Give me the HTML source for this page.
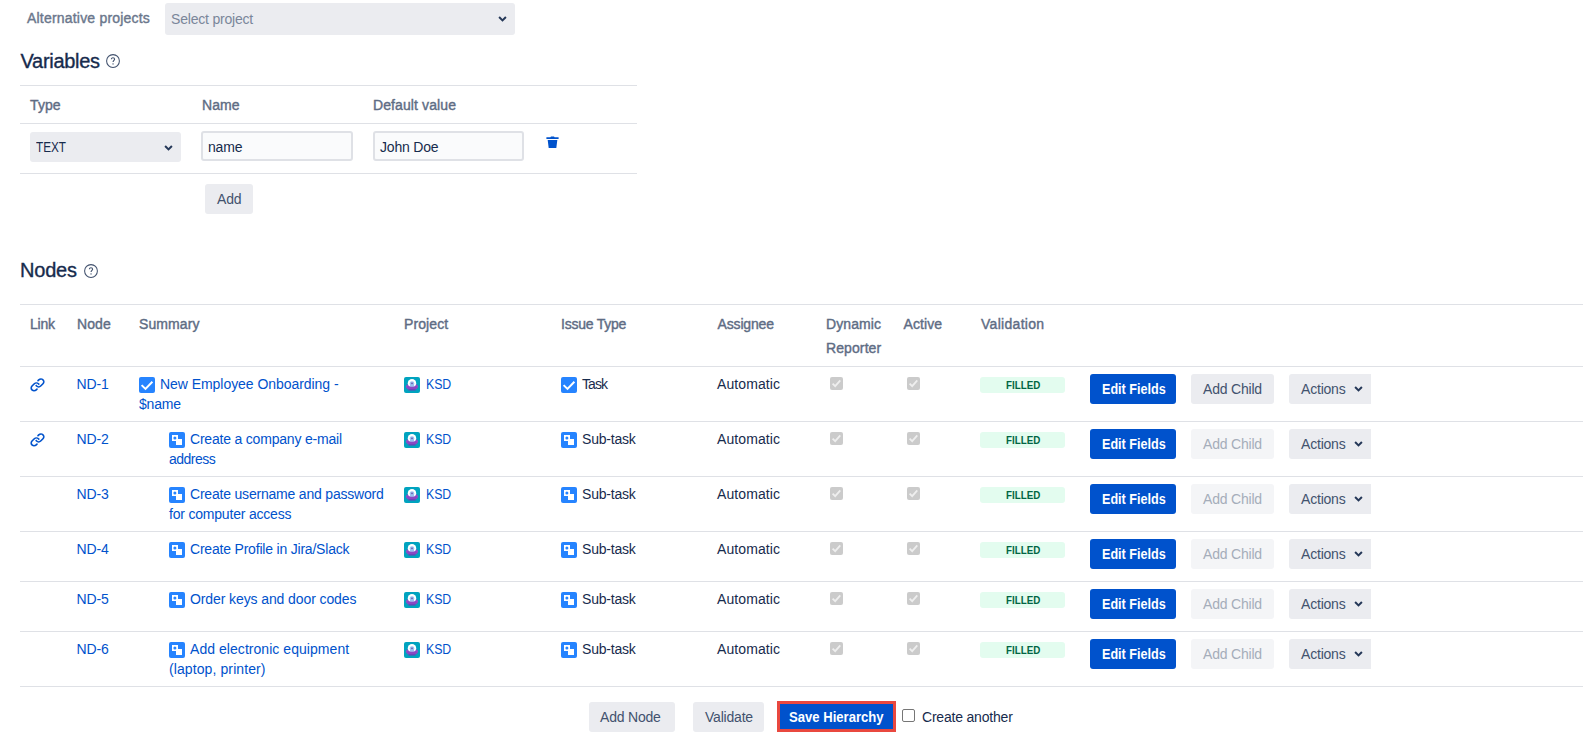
<!DOCTYPE html>
<html><head><meta charset="utf-8"><title>Nodes</title>
<style>
html,body{margin:0;padding:0;background:#fff;}
body{width:1583px;height:751px;position:relative;overflow:hidden;font-family:"Liberation Sans", sans-serif;-webkit-font-smoothing:antialiased;}
.t{position:absolute;white-space:nowrap;}
.b{position:absolute;display:block;}
</style></head><body>
<div class="t" style="left:27px;top:8.15px;font-size:14px;line-height:20px;font-weight:400;color:#6b778c;letter-spacing:0.2px;-webkit-text-stroke:0.4px #6b778c;">Alternative projects</div>
<div class="b" style="left:165px;top:3px;width:350px;height:32px;background:#ebecf0;border-radius:3px"></div>
<div class="t" style="left:171px;top:9.15px;font-size:14px;line-height:20px;font-weight:400;color:#7a869a;letter-spacing:-0.2px;">Select project</div>
<svg class="b" style="left:497px;top:14px" width="11" height="9" viewBox="0 0 11 9"><path d="M2.1 3 L5.5 6.4 L8.9 3" fill="none" stroke="#253858" stroke-width="2" stroke-linecap="butt"/></svg>
<div class="t" style="left:20.5px;top:46.57px;font-size:20px;line-height:29px;font-weight:400;color:#172b4d;letter-spacing:-0.3px;-webkit-text-stroke:0.35px #172b4d;">Variables</div>
<svg class="b" style="left:106px;top:54px" width="14" height="14" viewBox="0 0 14 14"><circle cx="7" cy="7" r="6.4" fill="none" stroke="#42526e" stroke-width="1.05"/><path d="M5.4 5.3 C5.4 4.3 6.1 3.8 7 3.8 C7.9 3.8 8.6 4.4 8.6 5.2 C8.6 6.4 7.05 6.5 7.05 8.1" fill="none" stroke="#42526e" stroke-width="1.1"/><circle cx="7.05" cy="9.9" r="0.7" fill="#42526e"/></svg>
<div class="b" style="left:20px;top:85px;width:617px;height:1px;background:#dfe1e6"></div>
<div class="t" style="left:30px;top:95.15px;font-size:14px;line-height:20px;font-weight:400;color:#5e6c84;letter-spacing:0.1px;-webkit-text-stroke:0.4px #5e6c84;">Type</div>
<div class="t" style="left:202px;top:95.15px;font-size:14px;line-height:20px;font-weight:400;color:#5e6c84;letter-spacing:0.1px;-webkit-text-stroke:0.4px #5e6c84;">Name</div>
<div class="t" style="left:373px;top:95.15px;font-size:14px;line-height:20px;font-weight:400;color:#5e6c84;letter-spacing:0.1px;-webkit-text-stroke:0.4px #5e6c84;">Default value</div>
<div class="b" style="left:20px;top:123px;width:617px;height:1px;background:#dfe1e6"></div>
<div class="b" style="left:30px;top:132px;width:151px;height:30px;background:#ebecf0;border-radius:3px"></div>
<div class="t" style="left:36px;top:137.15px;font-size:14px;line-height:20px;font-weight:400;color:#172b4d;letter-spacing:0px;transform:scaleX(0.84);transform-origin:0 0;">TEXT</div>
<svg class="b" style="left:163px;top:143px" width="11" height="9" viewBox="0 0 11 9"><path d="M2.1 3 L5.5 6.4 L8.9 3" fill="none" stroke="#253858" stroke-width="2" stroke-linecap="butt"/></svg>
<div class="b" style="left:201px;top:131px;width:152px;height:30px;background:#fafbfc;border:2px solid #dfe1e6;border-radius:3px;box-sizing:border-box"></div>
<div class="t" style="left:208px;top:137.15px;font-size:14px;line-height:20px;font-weight:400;color:#172b4d;letter-spacing:-0.2px;">name</div>
<div class="b" style="left:373px;top:131px;width:151px;height:30px;background:#fafbfc;border:2px solid #dfe1e6;border-radius:3px;box-sizing:border-box"></div>
<div class="t" style="left:380px;top:137.15px;font-size:14px;line-height:20px;font-weight:400;color:#172b4d;letter-spacing:-0.2px;">John Doe</div>
<svg class="b" style="left:546px;top:136px" width="13" height="12" viewBox="0 0 13 12"><path d="M5 0.5 H8 L8.6 1.2 H12.6 V2.9 H0.4 V1.2 H4.4 Z" fill="#0052cc"/><path d="M1.7 3.9 H11.3 L10.3 12 H2.7 Z" fill="#0052cc"/></svg>
<div class="b" style="left:20px;top:173px;width:617px;height:1px;background:#dfe1e6"></div>
<div class="b" style="left:205px;top:184px;width:48px;height:30px;background:#ebecf0;border-radius:3px"></div>
<div class="t" style="left:217px;top:189.15px;font-size:14px;line-height:20px;font-weight:400;color:#42526e;letter-spacing:-0.2px;">Add</div>
<div class="t" style="left:20px;top:255.57px;font-size:20px;line-height:29px;font-weight:400;color:#172b4d;letter-spacing:-0.2px;-webkit-text-stroke:0.35px #172b4d;">Nodes</div>
<svg class="b" style="left:84px;top:264px" width="14" height="14" viewBox="0 0 14 14"><circle cx="7" cy="7" r="6.4" fill="none" stroke="#42526e" stroke-width="1.05"/><path d="M5.4 5.3 C5.4 4.3 6.1 3.8 7 3.8 C7.9 3.8 8.6 4.4 8.6 5.2 C8.6 6.4 7.05 6.5 7.05 8.1" fill="none" stroke="#42526e" stroke-width="1.1"/><circle cx="7.05" cy="9.9" r="0.7" fill="#42526e"/></svg>
<div class="b" style="left:20px;top:304px;width:1563px;height:1px;background:#dfe1e6"></div>
<div class="b" style="left:20px;top:366px;width:1563px;height:1px;background:#dfe1e6"></div>
<div class="b" style="left:20px;top:421px;width:1563px;height:1px;background:#dfe1e6"></div>
<div class="b" style="left:20px;top:476px;width:1563px;height:1px;background:#dfe1e6"></div>
<div class="b" style="left:20px;top:531px;width:1563px;height:1px;background:#dfe1e6"></div>
<div class="b" style="left:20px;top:581px;width:1563px;height:1px;background:#dfe1e6"></div>
<div class="b" style="left:20px;top:631px;width:1563px;height:1px;background:#dfe1e6"></div>
<div class="b" style="left:20px;top:686px;width:1563px;height:1px;background:#dfe1e6"></div>
<div class="t" style="left:30px;top:314.15px;font-size:14px;line-height:20px;font-weight:400;color:#5e6c84;letter-spacing:-0.2px;-webkit-text-stroke:0.4px #5e6c84;">Link</div>
<div class="t" style="left:77px;top:314.15px;font-size:14px;line-height:20px;font-weight:400;color:#5e6c84;letter-spacing:0.1px;-webkit-text-stroke:0.4px #5e6c84;">Node</div>
<div class="t" style="left:139px;top:314.15px;font-size:14px;line-height:20px;font-weight:400;color:#5e6c84;letter-spacing:0.1px;-webkit-text-stroke:0.4px #5e6c84;">Summary</div>
<div class="t" style="left:404px;top:314.15px;font-size:14px;line-height:20px;font-weight:400;color:#5e6c84;letter-spacing:0.1px;-webkit-text-stroke:0.4px #5e6c84;">Project</div>
<div class="t" style="left:561px;top:314.15px;font-size:14px;line-height:20px;font-weight:400;color:#5e6c84;letter-spacing:-0.23px;-webkit-text-stroke:0.4px #5e6c84;">Issue Type</div>
<div class="t" style="left:717.5px;top:314.15px;font-size:14px;line-height:20px;font-weight:400;color:#5e6c84;letter-spacing:-0.15px;-webkit-text-stroke:0.4px #5e6c84;">Assignee</div>
<div class="t" style="left:826px;top:314.15px;font-size:14px;line-height:20px;font-weight:400;color:#5e6c84;letter-spacing:0.1px;-webkit-text-stroke:0.4px #5e6c84;">Dynamic</div>
<div class="t" style="left:903.5px;top:314.15px;font-size:14px;line-height:20px;font-weight:400;color:#5e6c84;letter-spacing:0.1px;-webkit-text-stroke:0.4px #5e6c84;">Active</div>
<div class="t" style="left:981px;top:314.15px;font-size:14px;line-height:20px;font-weight:400;color:#5e6c84;letter-spacing:0.3px;-webkit-text-stroke:0.4px #5e6c84;">Validation</div>
<div class="t" style="left:826px;top:338.15px;font-size:14px;line-height:20px;font-weight:400;color:#5e6c84;letter-spacing:0.1px;-webkit-text-stroke:0.4px #5e6c84;">Reporter</div>
<svg class="b" style="left:28.30px;top:374.60px" width="19" height="19" viewBox="0 0 24 24"><g fill="#0052cc"><path d="M12.856 5.457l-.937.92a1.002 1.002 0 000 1.437 1.047 1.047 0 001.463 0l.984-.966c.967-.95 2.542-1.135 3.602-.288a2.54 2.54 0 01.203 3.81l-2.903 2.852a2.646 2.646 0 01-3.696 0l-1.11-1.09L9 13.57l1.108 1.089c1.822 1.788 4.802 1.788 6.622 0l2.905-2.852a4.558 4.558 0 00-.357-6.82c-1.893-1.517-4.695-1.226-6.422.47"/><path d="M11.144 19.543l.937-.92a1.002 1.002 0 000-1.437 1.047 1.047 0 00-1.462 0l-.985.966c-.967.95-2.542 1.135-3.602.288a2.54 2.54 0 01-.203-3.81l2.903-2.852a2.646 2.646 0 013.696 0l1.11 1.09L15 11.43l-1.108-1.089c-1.822-1.788-4.802-1.788-6.622 0l-2.905 2.852a4.558 4.558 0 00.357 6.82c1.893 1.517 4.695 1.226 6.422-.47"/></g></svg>
<div class="t" style="left:76.5px;top:374.15px;font-size:14px;line-height:20px;font-weight:400;color:#0052cc;letter-spacing:-0.1px;">ND-1</div>
<svg class="b" style="left:139px;top:377px" width="16" height="16" viewBox="0 0 16 16"><rect x="0" y="0" width="16" height="16" rx="2" fill="#2684ff"/><path d="M2.6 8.1 L6.5 11.9 L13.4 4.8" fill="none" stroke="#fff" stroke-width="2"/></svg>
<div class="t" style="left:160px;top:374.15px;font-size:14px;line-height:20px;font-weight:400;color:#0052cc;letter-spacing:-0.05px;">New Employee Onboarding -</div>
<div class="t" style="left:139px;top:394.15px;font-size:14px;line-height:20px;font-weight:400;color:#0052cc;letter-spacing:-0.2px;">$name</div>
<svg class="b" style="left:404px;top:377px" width="16" height="16" viewBox="0 0 16 16"><rect x="0" y="0" width="16" height="16" rx="2" fill="#00a3bf"/><ellipse cx="8" cy="9.5" rx="6.1" ry="3.1" fill="#8e4fc9"/><circle cx="8" cy="6.3" r="4.2" fill="#fff"/><ellipse cx="8" cy="10.8" rx="5.4" ry="1.9" fill="#8a48c4"/><rect x="4.4" y="12.2" width="7.2" height="1.3" rx="0.6" fill="#6a3fb5"/><circle cx="8" cy="6.6" r="2.3" fill="#9cc1f2"/><rect x="5.9" y="7" width="4.2" height="2.8" rx="1" fill="#9cc1f2"/><circle cx="8" cy="6.3" r="0.9" fill="#6b5aa8"/></svg>
<div class="t" style="left:425.5px;top:374.15px;font-size:14px;line-height:20px;font-weight:400;color:#0052cc;letter-spacing:-0.1px;transform:scaleX(0.88);transform-origin:0 0;">KSD</div>
<svg class="b" style="left:561px;top:377px" width="16" height="16" viewBox="0 0 16 16"><rect x="0" y="0" width="16" height="16" rx="2" fill="#2684ff"/><path d="M2.6 8.1 L6.5 11.9 L13.4 4.8" fill="none" stroke="#fff" stroke-width="2"/></svg>
<div class="t" style="left:582px;top:374.15px;font-size:14px;line-height:20px;font-weight:400;color:#172b4d;letter-spacing:-0.9px;">Task</div>
<div class="t" style="left:717px;top:374.15px;font-size:14px;line-height:20px;font-weight:400;color:#172b4d;letter-spacing:0.1px;">Automatic</div>
<svg class="b" style="left:830px;top:377px" width="13" height="13" viewBox="0 0 13 13"><rect x="0" y="0" width="13" height="13" rx="2" fill="#cbcbcb"/><path d="M2.6 6.6 L5.2 9.1 L10.3 3.4" fill="none" stroke="#efefef" stroke-width="1.8"/></svg>
<svg class="b" style="left:907px;top:377px" width="13" height="13" viewBox="0 0 13 13"><rect x="0" y="0" width="13" height="13" rx="2" fill="#cbcbcb"/><path d="M2.6 6.6 L5.2 9.1 L10.3 3.4" fill="none" stroke="#efefef" stroke-width="1.8"/></svg>
<div class="b" style="left:980px;top:377px;width:85px;height:16px;background:#e3fcef;border-radius:3px"></div>
<div class="t" style="left:1005.5px;top:377.19px;font-size:11px;line-height:16px;font-weight:700;color:#006644;letter-spacing:0px;transform:scaleX(0.89);transform-origin:0 0;">FILLED</div>
<div class="b" style="left:1090px;top:374px;width:86px;height:30px;background:#0052cc;border-radius:3px"></div>
<div class="t" style="left:1102px;top:379.15px;font-size:14px;line-height:20px;font-weight:700;color:#fff;letter-spacing:0px;transform:scaleX(0.9);transform-origin:0 0;">Edit Fields</div>
<div class="b" style="left:1191px;top:374px;width:83px;height:30px;background:#ebecf0;border-radius:3px"></div>
<div class="t" style="left:1203px;top:379.15px;font-size:14px;line-height:20px;font-weight:400;color:#42526e;letter-spacing:-0.2px;">Add Child</div>
<div class="b" style="left:1289px;top:374px;width:82px;height:30px;background:#ebecf0;border-radius:3px 0 0 3px"></div>
<div class="t" style="left:1301px;top:379.15px;font-size:14px;line-height:20px;font-weight:400;color:#42526e;letter-spacing:-0.2px;">Actions</div>
<svg class="b" style="left:1353px;top:384px" width="11" height="9" viewBox="0 0 11 9"><path d="M2.1 3 L5.5 6.4 L8.9 3" fill="none" stroke="#253858" stroke-width="2" stroke-linecap="butt"/></svg>
<svg class="b" style="left:28.30px;top:429.60px" width="19" height="19" viewBox="0 0 24 24"><g fill="#0052cc"><path d="M12.856 5.457l-.937.92a1.002 1.002 0 000 1.437 1.047 1.047 0 001.463 0l.984-.966c.967-.95 2.542-1.135 3.602-.288a2.54 2.54 0 01.203 3.81l-2.903 2.852a2.646 2.646 0 01-3.696 0l-1.11-1.09L9 13.57l1.108 1.089c1.822 1.788 4.802 1.788 6.622 0l2.905-2.852a4.558 4.558 0 00-.357-6.82c-1.893-1.517-4.695-1.226-6.422.47"/><path d="M11.144 19.543l.937-.92a1.002 1.002 0 000-1.437 1.047 1.047 0 00-1.462 0l-.985.966c-.967.95-2.542 1.135-3.602.288a2.54 2.54 0 01-.203-3.81l2.903-2.852a2.646 2.646 0 013.696 0l1.11 1.09L15 11.43l-1.108-1.089c-1.822-1.788-4.802-1.788-6.622 0l-2.905 2.852a4.558 4.558 0 00.357 6.82c1.893 1.517 4.695 1.226 6.422-.47"/></g></svg>
<div class="t" style="left:76.5px;top:429.15px;font-size:14px;line-height:20px;font-weight:400;color:#0052cc;letter-spacing:-0.1px;">ND-2</div>
<svg class="b" style="left:169px;top:432px" width="16" height="16" viewBox="0 0 16 16"><rect x="0" y="0" width="16" height="16" rx="2" fill="#2684ff"/><rect x="3" y="3" width="6" height="6" fill="#fff"/><circle cx="5.9" cy="5.9" r="1.5" fill="#2684ff"/><rect x="7" y="7" width="6" height="6" fill="#fff"/></svg>
<div class="t" style="left:190px;top:429.15px;font-size:14px;line-height:20px;font-weight:400;color:#0052cc;letter-spacing:-0.2px;">Create a company e-mail</div>
<div class="t" style="left:169px;top:449.15px;font-size:14px;line-height:20px;font-weight:400;color:#0052cc;letter-spacing:-0.5px;">address</div>
<svg class="b" style="left:404px;top:432px" width="16" height="16" viewBox="0 0 16 16"><rect x="0" y="0" width="16" height="16" rx="2" fill="#00a3bf"/><ellipse cx="8" cy="9.5" rx="6.1" ry="3.1" fill="#8e4fc9"/><circle cx="8" cy="6.3" r="4.2" fill="#fff"/><ellipse cx="8" cy="10.8" rx="5.4" ry="1.9" fill="#8a48c4"/><rect x="4.4" y="12.2" width="7.2" height="1.3" rx="0.6" fill="#6a3fb5"/><circle cx="8" cy="6.6" r="2.3" fill="#9cc1f2"/><rect x="5.9" y="7" width="4.2" height="2.8" rx="1" fill="#9cc1f2"/><circle cx="8" cy="6.3" r="0.9" fill="#6b5aa8"/></svg>
<div class="t" style="left:425.5px;top:429.15px;font-size:14px;line-height:20px;font-weight:400;color:#0052cc;letter-spacing:-0.1px;transform:scaleX(0.88);transform-origin:0 0;">KSD</div>
<svg class="b" style="left:561px;top:432px" width="16" height="16" viewBox="0 0 16 16"><rect x="0" y="0" width="16" height="16" rx="2" fill="#2684ff"/><rect x="3" y="3" width="6" height="6" fill="#fff"/><circle cx="5.9" cy="5.9" r="1.5" fill="#2684ff"/><rect x="7" y="7" width="6" height="6" fill="#fff"/></svg>
<div class="t" style="left:582px;top:429.15px;font-size:14px;line-height:20px;font-weight:400;color:#172b4d;letter-spacing:-0.2px;">Sub-task</div>
<div class="t" style="left:717px;top:429.15px;font-size:14px;line-height:20px;font-weight:400;color:#172b4d;letter-spacing:0.1px;">Automatic</div>
<svg class="b" style="left:830px;top:432px" width="13" height="13" viewBox="0 0 13 13"><rect x="0" y="0" width="13" height="13" rx="2" fill="#cbcbcb"/><path d="M2.6 6.6 L5.2 9.1 L10.3 3.4" fill="none" stroke="#efefef" stroke-width="1.8"/></svg>
<svg class="b" style="left:907px;top:432px" width="13" height="13" viewBox="0 0 13 13"><rect x="0" y="0" width="13" height="13" rx="2" fill="#cbcbcb"/><path d="M2.6 6.6 L5.2 9.1 L10.3 3.4" fill="none" stroke="#efefef" stroke-width="1.8"/></svg>
<div class="b" style="left:980px;top:432px;width:85px;height:16px;background:#e3fcef;border-radius:3px"></div>
<div class="t" style="left:1005.5px;top:432.19px;font-size:11px;line-height:16px;font-weight:700;color:#006644;letter-spacing:0px;transform:scaleX(0.89);transform-origin:0 0;">FILLED</div>
<div class="b" style="left:1090px;top:429px;width:86px;height:30px;background:#0052cc;border-radius:3px"></div>
<div class="t" style="left:1102px;top:434.15px;font-size:14px;line-height:20px;font-weight:700;color:#fff;letter-spacing:0px;transform:scaleX(0.9);transform-origin:0 0;">Edit Fields</div>
<div class="b" style="left:1191px;top:429px;width:83px;height:30px;background:#f4f5f7;border-radius:3px"></div>
<div class="t" style="left:1203px;top:434.15px;font-size:14px;line-height:20px;font-weight:400;color:#a5adba;letter-spacing:-0.2px;">Add Child</div>
<div class="b" style="left:1289px;top:429px;width:82px;height:30px;background:#ebecf0;border-radius:3px 0 0 3px"></div>
<div class="t" style="left:1301px;top:434.15px;font-size:14px;line-height:20px;font-weight:400;color:#42526e;letter-spacing:-0.2px;">Actions</div>
<svg class="b" style="left:1353px;top:439px" width="11" height="9" viewBox="0 0 11 9"><path d="M2.1 3 L5.5 6.4 L8.9 3" fill="none" stroke="#253858" stroke-width="2" stroke-linecap="butt"/></svg>
<div class="t" style="left:76.5px;top:484.15px;font-size:14px;line-height:20px;font-weight:400;color:#0052cc;letter-spacing:-0.1px;">ND-3</div>
<svg class="b" style="left:169px;top:487px" width="16" height="16" viewBox="0 0 16 16"><rect x="0" y="0" width="16" height="16" rx="2" fill="#2684ff"/><rect x="3" y="3" width="6" height="6" fill="#fff"/><circle cx="5.9" cy="5.9" r="1.5" fill="#2684ff"/><rect x="7" y="7" width="6" height="6" fill="#fff"/></svg>
<div class="t" style="left:190px;top:484.15px;font-size:14px;line-height:20px;font-weight:400;color:#0052cc;letter-spacing:-0.2px;">Create username and password</div>
<div class="t" style="left:169px;top:504.15px;font-size:14px;line-height:20px;font-weight:400;color:#0052cc;letter-spacing:-0.2px;">for computer access</div>
<svg class="b" style="left:404px;top:487px" width="16" height="16" viewBox="0 0 16 16"><rect x="0" y="0" width="16" height="16" rx="2" fill="#00a3bf"/><ellipse cx="8" cy="9.5" rx="6.1" ry="3.1" fill="#8e4fc9"/><circle cx="8" cy="6.3" r="4.2" fill="#fff"/><ellipse cx="8" cy="10.8" rx="5.4" ry="1.9" fill="#8a48c4"/><rect x="4.4" y="12.2" width="7.2" height="1.3" rx="0.6" fill="#6a3fb5"/><circle cx="8" cy="6.6" r="2.3" fill="#9cc1f2"/><rect x="5.9" y="7" width="4.2" height="2.8" rx="1" fill="#9cc1f2"/><circle cx="8" cy="6.3" r="0.9" fill="#6b5aa8"/></svg>
<div class="t" style="left:425.5px;top:484.15px;font-size:14px;line-height:20px;font-weight:400;color:#0052cc;letter-spacing:-0.1px;transform:scaleX(0.88);transform-origin:0 0;">KSD</div>
<svg class="b" style="left:561px;top:487px" width="16" height="16" viewBox="0 0 16 16"><rect x="0" y="0" width="16" height="16" rx="2" fill="#2684ff"/><rect x="3" y="3" width="6" height="6" fill="#fff"/><circle cx="5.9" cy="5.9" r="1.5" fill="#2684ff"/><rect x="7" y="7" width="6" height="6" fill="#fff"/></svg>
<div class="t" style="left:582px;top:484.15px;font-size:14px;line-height:20px;font-weight:400;color:#172b4d;letter-spacing:-0.2px;">Sub-task</div>
<div class="t" style="left:717px;top:484.15px;font-size:14px;line-height:20px;font-weight:400;color:#172b4d;letter-spacing:0.1px;">Automatic</div>
<svg class="b" style="left:830px;top:487px" width="13" height="13" viewBox="0 0 13 13"><rect x="0" y="0" width="13" height="13" rx="2" fill="#cbcbcb"/><path d="M2.6 6.6 L5.2 9.1 L10.3 3.4" fill="none" stroke="#efefef" stroke-width="1.8"/></svg>
<svg class="b" style="left:907px;top:487px" width="13" height="13" viewBox="0 0 13 13"><rect x="0" y="0" width="13" height="13" rx="2" fill="#cbcbcb"/><path d="M2.6 6.6 L5.2 9.1 L10.3 3.4" fill="none" stroke="#efefef" stroke-width="1.8"/></svg>
<div class="b" style="left:980px;top:487px;width:85px;height:16px;background:#e3fcef;border-radius:3px"></div>
<div class="t" style="left:1005.5px;top:487.19px;font-size:11px;line-height:16px;font-weight:700;color:#006644;letter-spacing:0px;transform:scaleX(0.89);transform-origin:0 0;">FILLED</div>
<div class="b" style="left:1090px;top:484px;width:86px;height:30px;background:#0052cc;border-radius:3px"></div>
<div class="t" style="left:1102px;top:489.15px;font-size:14px;line-height:20px;font-weight:700;color:#fff;letter-spacing:0px;transform:scaleX(0.9);transform-origin:0 0;">Edit Fields</div>
<div class="b" style="left:1191px;top:484px;width:83px;height:30px;background:#f4f5f7;border-radius:3px"></div>
<div class="t" style="left:1203px;top:489.15px;font-size:14px;line-height:20px;font-weight:400;color:#a5adba;letter-spacing:-0.2px;">Add Child</div>
<div class="b" style="left:1289px;top:484px;width:82px;height:30px;background:#ebecf0;border-radius:3px 0 0 3px"></div>
<div class="t" style="left:1301px;top:489.15px;font-size:14px;line-height:20px;font-weight:400;color:#42526e;letter-spacing:-0.2px;">Actions</div>
<svg class="b" style="left:1353px;top:494px" width="11" height="9" viewBox="0 0 11 9"><path d="M2.1 3 L5.5 6.4 L8.9 3" fill="none" stroke="#253858" stroke-width="2" stroke-linecap="butt"/></svg>
<div class="t" style="left:76.5px;top:539.15px;font-size:14px;line-height:20px;font-weight:400;color:#0052cc;letter-spacing:-0.1px;">ND-4</div>
<svg class="b" style="left:169px;top:542px" width="16" height="16" viewBox="0 0 16 16"><rect x="0" y="0" width="16" height="16" rx="2" fill="#2684ff"/><rect x="3" y="3" width="6" height="6" fill="#fff"/><circle cx="5.9" cy="5.9" r="1.5" fill="#2684ff"/><rect x="7" y="7" width="6" height="6" fill="#fff"/></svg>
<div class="t" style="left:190px;top:539.15px;font-size:14px;line-height:20px;font-weight:400;color:#0052cc;letter-spacing:-0.2px;">Create Profile in Jira/Slack</div>
<svg class="b" style="left:404px;top:542px" width="16" height="16" viewBox="0 0 16 16"><rect x="0" y="0" width="16" height="16" rx="2" fill="#00a3bf"/><ellipse cx="8" cy="9.5" rx="6.1" ry="3.1" fill="#8e4fc9"/><circle cx="8" cy="6.3" r="4.2" fill="#fff"/><ellipse cx="8" cy="10.8" rx="5.4" ry="1.9" fill="#8a48c4"/><rect x="4.4" y="12.2" width="7.2" height="1.3" rx="0.6" fill="#6a3fb5"/><circle cx="8" cy="6.6" r="2.3" fill="#9cc1f2"/><rect x="5.9" y="7" width="4.2" height="2.8" rx="1" fill="#9cc1f2"/><circle cx="8" cy="6.3" r="0.9" fill="#6b5aa8"/></svg>
<div class="t" style="left:425.5px;top:539.15px;font-size:14px;line-height:20px;font-weight:400;color:#0052cc;letter-spacing:-0.1px;transform:scaleX(0.88);transform-origin:0 0;">KSD</div>
<svg class="b" style="left:561px;top:542px" width="16" height="16" viewBox="0 0 16 16"><rect x="0" y="0" width="16" height="16" rx="2" fill="#2684ff"/><rect x="3" y="3" width="6" height="6" fill="#fff"/><circle cx="5.9" cy="5.9" r="1.5" fill="#2684ff"/><rect x="7" y="7" width="6" height="6" fill="#fff"/></svg>
<div class="t" style="left:582px;top:539.15px;font-size:14px;line-height:20px;font-weight:400;color:#172b4d;letter-spacing:-0.2px;">Sub-task</div>
<div class="t" style="left:717px;top:539.15px;font-size:14px;line-height:20px;font-weight:400;color:#172b4d;letter-spacing:0.1px;">Automatic</div>
<svg class="b" style="left:830px;top:542px" width="13" height="13" viewBox="0 0 13 13"><rect x="0" y="0" width="13" height="13" rx="2" fill="#cbcbcb"/><path d="M2.6 6.6 L5.2 9.1 L10.3 3.4" fill="none" stroke="#efefef" stroke-width="1.8"/></svg>
<svg class="b" style="left:907px;top:542px" width="13" height="13" viewBox="0 0 13 13"><rect x="0" y="0" width="13" height="13" rx="2" fill="#cbcbcb"/><path d="M2.6 6.6 L5.2 9.1 L10.3 3.4" fill="none" stroke="#efefef" stroke-width="1.8"/></svg>
<div class="b" style="left:980px;top:542px;width:85px;height:16px;background:#e3fcef;border-radius:3px"></div>
<div class="t" style="left:1005.5px;top:542.19px;font-size:11px;line-height:16px;font-weight:700;color:#006644;letter-spacing:0px;transform:scaleX(0.89);transform-origin:0 0;">FILLED</div>
<div class="b" style="left:1090px;top:539px;width:86px;height:30px;background:#0052cc;border-radius:3px"></div>
<div class="t" style="left:1102px;top:544.15px;font-size:14px;line-height:20px;font-weight:700;color:#fff;letter-spacing:0px;transform:scaleX(0.9);transform-origin:0 0;">Edit Fields</div>
<div class="b" style="left:1191px;top:539px;width:83px;height:30px;background:#f4f5f7;border-radius:3px"></div>
<div class="t" style="left:1203px;top:544.15px;font-size:14px;line-height:20px;font-weight:400;color:#a5adba;letter-spacing:-0.2px;">Add Child</div>
<div class="b" style="left:1289px;top:539px;width:82px;height:30px;background:#ebecf0;border-radius:3px 0 0 3px"></div>
<div class="t" style="left:1301px;top:544.15px;font-size:14px;line-height:20px;font-weight:400;color:#42526e;letter-spacing:-0.2px;">Actions</div>
<svg class="b" style="left:1353px;top:549px" width="11" height="9" viewBox="0 0 11 9"><path d="M2.1 3 L5.5 6.4 L8.9 3" fill="none" stroke="#253858" stroke-width="2" stroke-linecap="butt"/></svg>
<div class="t" style="left:76.5px;top:589.15px;font-size:14px;line-height:20px;font-weight:400;color:#0052cc;letter-spacing:-0.1px;">ND-5</div>
<svg class="b" style="left:169px;top:592px" width="16" height="16" viewBox="0 0 16 16"><rect x="0" y="0" width="16" height="16" rx="2" fill="#2684ff"/><rect x="3" y="3" width="6" height="6" fill="#fff"/><circle cx="5.9" cy="5.9" r="1.5" fill="#2684ff"/><rect x="7" y="7" width="6" height="6" fill="#fff"/></svg>
<div class="t" style="left:190px;top:589.15px;font-size:14px;line-height:20px;font-weight:400;color:#0052cc;letter-spacing:-0.1px;">Order keys and door codes</div>
<svg class="b" style="left:404px;top:592px" width="16" height="16" viewBox="0 0 16 16"><rect x="0" y="0" width="16" height="16" rx="2" fill="#00a3bf"/><ellipse cx="8" cy="9.5" rx="6.1" ry="3.1" fill="#8e4fc9"/><circle cx="8" cy="6.3" r="4.2" fill="#fff"/><ellipse cx="8" cy="10.8" rx="5.4" ry="1.9" fill="#8a48c4"/><rect x="4.4" y="12.2" width="7.2" height="1.3" rx="0.6" fill="#6a3fb5"/><circle cx="8" cy="6.6" r="2.3" fill="#9cc1f2"/><rect x="5.9" y="7" width="4.2" height="2.8" rx="1" fill="#9cc1f2"/><circle cx="8" cy="6.3" r="0.9" fill="#6b5aa8"/></svg>
<div class="t" style="left:425.5px;top:589.15px;font-size:14px;line-height:20px;font-weight:400;color:#0052cc;letter-spacing:-0.1px;transform:scaleX(0.88);transform-origin:0 0;">KSD</div>
<svg class="b" style="left:561px;top:592px" width="16" height="16" viewBox="0 0 16 16"><rect x="0" y="0" width="16" height="16" rx="2" fill="#2684ff"/><rect x="3" y="3" width="6" height="6" fill="#fff"/><circle cx="5.9" cy="5.9" r="1.5" fill="#2684ff"/><rect x="7" y="7" width="6" height="6" fill="#fff"/></svg>
<div class="t" style="left:582px;top:589.15px;font-size:14px;line-height:20px;font-weight:400;color:#172b4d;letter-spacing:-0.2px;">Sub-task</div>
<div class="t" style="left:717px;top:589.15px;font-size:14px;line-height:20px;font-weight:400;color:#172b4d;letter-spacing:0.1px;">Automatic</div>
<svg class="b" style="left:830px;top:592px" width="13" height="13" viewBox="0 0 13 13"><rect x="0" y="0" width="13" height="13" rx="2" fill="#cbcbcb"/><path d="M2.6 6.6 L5.2 9.1 L10.3 3.4" fill="none" stroke="#efefef" stroke-width="1.8"/></svg>
<svg class="b" style="left:907px;top:592px" width="13" height="13" viewBox="0 0 13 13"><rect x="0" y="0" width="13" height="13" rx="2" fill="#cbcbcb"/><path d="M2.6 6.6 L5.2 9.1 L10.3 3.4" fill="none" stroke="#efefef" stroke-width="1.8"/></svg>
<div class="b" style="left:980px;top:592px;width:85px;height:16px;background:#e3fcef;border-radius:3px"></div>
<div class="t" style="left:1005.5px;top:592.19px;font-size:11px;line-height:16px;font-weight:700;color:#006644;letter-spacing:0px;transform:scaleX(0.89);transform-origin:0 0;">FILLED</div>
<div class="b" style="left:1090px;top:589px;width:86px;height:30px;background:#0052cc;border-radius:3px"></div>
<div class="t" style="left:1102px;top:594.15px;font-size:14px;line-height:20px;font-weight:700;color:#fff;letter-spacing:0px;transform:scaleX(0.9);transform-origin:0 0;">Edit Fields</div>
<div class="b" style="left:1191px;top:589px;width:83px;height:30px;background:#f4f5f7;border-radius:3px"></div>
<div class="t" style="left:1203px;top:594.15px;font-size:14px;line-height:20px;font-weight:400;color:#a5adba;letter-spacing:-0.2px;">Add Child</div>
<div class="b" style="left:1289px;top:589px;width:82px;height:30px;background:#ebecf0;border-radius:3px 0 0 3px"></div>
<div class="t" style="left:1301px;top:594.15px;font-size:14px;line-height:20px;font-weight:400;color:#42526e;letter-spacing:-0.2px;">Actions</div>
<svg class="b" style="left:1353px;top:599px" width="11" height="9" viewBox="0 0 11 9"><path d="M2.1 3 L5.5 6.4 L8.9 3" fill="none" stroke="#253858" stroke-width="2" stroke-linecap="butt"/></svg>
<div class="t" style="left:76.5px;top:639.15px;font-size:14px;line-height:20px;font-weight:400;color:#0052cc;letter-spacing:-0.1px;">ND-6</div>
<svg class="b" style="left:169px;top:642px" width="16" height="16" viewBox="0 0 16 16"><rect x="0" y="0" width="16" height="16" rx="2" fill="#2684ff"/><rect x="3" y="3" width="6" height="6" fill="#fff"/><circle cx="5.9" cy="5.9" r="1.5" fill="#2684ff"/><rect x="7" y="7" width="6" height="6" fill="#fff"/></svg>
<div class="t" style="left:190px;top:639.15px;font-size:14px;line-height:20px;font-weight:400;color:#0052cc;letter-spacing:0.05px;">Add electronic equipment</div>
<div class="t" style="left:169px;top:659.15px;font-size:14px;line-height:20px;font-weight:400;color:#0052cc;letter-spacing:0.1px;">(laptop, printer)</div>
<svg class="b" style="left:404px;top:642px" width="16" height="16" viewBox="0 0 16 16"><rect x="0" y="0" width="16" height="16" rx="2" fill="#00a3bf"/><ellipse cx="8" cy="9.5" rx="6.1" ry="3.1" fill="#8e4fc9"/><circle cx="8" cy="6.3" r="4.2" fill="#fff"/><ellipse cx="8" cy="10.8" rx="5.4" ry="1.9" fill="#8a48c4"/><rect x="4.4" y="12.2" width="7.2" height="1.3" rx="0.6" fill="#6a3fb5"/><circle cx="8" cy="6.6" r="2.3" fill="#9cc1f2"/><rect x="5.9" y="7" width="4.2" height="2.8" rx="1" fill="#9cc1f2"/><circle cx="8" cy="6.3" r="0.9" fill="#6b5aa8"/></svg>
<div class="t" style="left:425.5px;top:639.15px;font-size:14px;line-height:20px;font-weight:400;color:#0052cc;letter-spacing:-0.1px;transform:scaleX(0.88);transform-origin:0 0;">KSD</div>
<svg class="b" style="left:561px;top:642px" width="16" height="16" viewBox="0 0 16 16"><rect x="0" y="0" width="16" height="16" rx="2" fill="#2684ff"/><rect x="3" y="3" width="6" height="6" fill="#fff"/><circle cx="5.9" cy="5.9" r="1.5" fill="#2684ff"/><rect x="7" y="7" width="6" height="6" fill="#fff"/></svg>
<div class="t" style="left:582px;top:639.15px;font-size:14px;line-height:20px;font-weight:400;color:#172b4d;letter-spacing:-0.2px;">Sub-task</div>
<div class="t" style="left:717px;top:639.15px;font-size:14px;line-height:20px;font-weight:400;color:#172b4d;letter-spacing:0.1px;">Automatic</div>
<svg class="b" style="left:830px;top:642px" width="13" height="13" viewBox="0 0 13 13"><rect x="0" y="0" width="13" height="13" rx="2" fill="#cbcbcb"/><path d="M2.6 6.6 L5.2 9.1 L10.3 3.4" fill="none" stroke="#efefef" stroke-width="1.8"/></svg>
<svg class="b" style="left:907px;top:642px" width="13" height="13" viewBox="0 0 13 13"><rect x="0" y="0" width="13" height="13" rx="2" fill="#cbcbcb"/><path d="M2.6 6.6 L5.2 9.1 L10.3 3.4" fill="none" stroke="#efefef" stroke-width="1.8"/></svg>
<div class="b" style="left:980px;top:642px;width:85px;height:16px;background:#e3fcef;border-radius:3px"></div>
<div class="t" style="left:1005.5px;top:642.19px;font-size:11px;line-height:16px;font-weight:700;color:#006644;letter-spacing:0px;transform:scaleX(0.89);transform-origin:0 0;">FILLED</div>
<div class="b" style="left:1090px;top:639px;width:86px;height:30px;background:#0052cc;border-radius:3px"></div>
<div class="t" style="left:1102px;top:644.15px;font-size:14px;line-height:20px;font-weight:700;color:#fff;letter-spacing:0px;transform:scaleX(0.9);transform-origin:0 0;">Edit Fields</div>
<div class="b" style="left:1191px;top:639px;width:83px;height:30px;background:#f4f5f7;border-radius:3px"></div>
<div class="t" style="left:1203px;top:644.15px;font-size:14px;line-height:20px;font-weight:400;color:#a5adba;letter-spacing:-0.2px;">Add Child</div>
<div class="b" style="left:1289px;top:639px;width:82px;height:30px;background:#ebecf0;border-radius:3px 0 0 3px"></div>
<div class="t" style="left:1301px;top:644.15px;font-size:14px;line-height:20px;font-weight:400;color:#42526e;letter-spacing:-0.2px;">Actions</div>
<svg class="b" style="left:1353px;top:649px" width="11" height="9" viewBox="0 0 11 9"><path d="M2.1 3 L5.5 6.4 L8.9 3" fill="none" stroke="#253858" stroke-width="2" stroke-linecap="butt"/></svg>
<div class="b" style="left:589px;top:702px;width:86px;height:30px;background:#ebecf0;border-radius:3px"></div>
<div class="t" style="left:600px;top:707.15px;font-size:14px;line-height:20px;font-weight:400;color:#42526e;letter-spacing:-0.2px;">Add Node</div>
<div class="b" style="left:693px;top:702px;width:71px;height:30px;background:#ebecf0;border-radius:3px"></div>
<div class="t" style="left:705px;top:707.15px;font-size:14px;line-height:20px;font-weight:400;color:#42526e;letter-spacing:-0.2px;">Validate</div>
<div class="b" style="left:777px;top:701px;width:119px;height:31px;background:#0052cc;border:3px solid #e9483f;box-sizing:border-box"></div>
<div class="t" style="left:789px;top:707.15px;font-size:14px;line-height:20px;font-weight:700;color:#fff;letter-spacing:0px;transform:scaleX(0.935);transform-origin:0 0;">Save Hierarchy</div>
<div class="b" style="left:902px;top:709px;width:13px;height:13px;border:1px solid #767676;border-radius:2px;box-sizing:border-box;background:#fff"></div>
<div class="t" style="left:922px;top:707.15px;font-size:14px;line-height:20px;font-weight:400;color:#172b4d;letter-spacing:-0.2px;">Create another</div>
</body></html>
